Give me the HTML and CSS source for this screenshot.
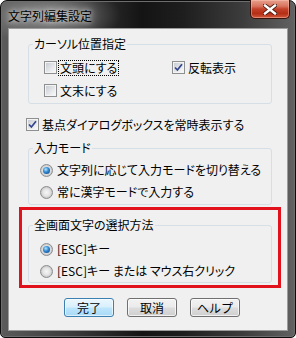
FILE: index.html
```html
<!doctype html>
<html>
  <head>
    <meta charset="UTF-8" />
    <link rel="stylesheet" href="styles.css">
  </head>
  <body>
    <div class="window">
      <div class="titlebar">
        <span class="title">文字列編集設定</span>
        <span class="close">
          <svg width="14" height="11" viewBox="0 0 14 11">
            <path d="M2 1.5 L12 9.5 M12 1.5 L2 9.5" stroke="#4a1a10" stroke-width="4.2" stroke-linecap="square" />
            <path d="M2 1.5 L12 9.5 M12 1.5 L2 9.5" stroke="#ffffff" stroke-width="2.4" stroke-linecap="square" />
          </svg>
        </span>
      </div>
      <div class="client">
        <fieldset class="group">
          <legend>カーソル位置指定</legend>
          <div class="cursor-grid">
            <label class="check">
              <span class="box"></span>
              <span class="text focus">文頭にする</span>
            </label>
            <label class="check">
              <span class="box">
                <svg width="9" height="9" viewBox="0 0 9 9"><path d="M1 4.5 L3.4 7 L8 1.2" fill="none" stroke="#34468c" stroke-width="1.7" /></svg>
              </span>
              <span class="text">反転表示</span>
            </label>
            <label class="check">
              <span class="box"></span>
              <span class="text">文末にする</span>
            </label>
          </div>
        </fieldset>

        <label class="check standalone">
          <span class="box">
            <svg width="9" height="9" viewBox="0 0 9 9"><path d="M1 4.5 L3.4 7 L8 1.2" fill="none" stroke="#34468c" stroke-width="1.7" /></svg>
          </span>
          <span class="text">基点ダイアログボックスを常時表示する</span>
        </label>

        <fieldset class="group group-input">
          <legend>入力モード</legend>
          <div class="radio-list">
            <label class="radio on"><span class="dot"></span><span class="text">文字列に応じて入力モードを切り替える</span></label>
            <label class="radio"><span class="dot"></span><span class="text">常に漢字モードで入力する</span></label>
          </div>
        </fieldset>

        <div class="highlight">
          <fieldset class="group">
            <legend>全画面文字の選択方法</legend>
            <div class="radio-list radio-list-wide">
              <label class="radio on"><span class="dot"></span><span class="text">[ESC]キー</span></label>
              <label class="radio"><span class="dot"></span><span class="text">[ESC]キー または マウス右クリック</span></label>
            </div>
          </fieldset>
        </div>

        <div class="buttons">
          <button class="btn default">完了</button>
          <button class="btn">取消</button>
          <button class="btn">ヘルプ</button>
        </div>
      </div>
    </div>
  </body>
</html>
```

FILE: styles.css
```css
html,
body {
  margin: 0;
  background: #ffffff;
  font-family: "Noto Sans CJK JP", "Liberation Sans", sans-serif;
  font-size: 12px;
  font-feature-settings: "palt";
  color: #000;
}
.window {
  width: 296px;
  height: 338px;
  box-sizing: border-box;
  border: 1px solid #0c0c0c;
  border-radius: 7px 7px 5px 5px;
  box-shadow: inset 0 0 0 1px #6d6d6d;
  background:
    radial-gradient(ellipse 70px 30px at 50px 14px, rgba(190, 190, 190, 0.55), rgba(190, 190, 190, 0) 100%),
    linear-gradient(to right, #5b5b5b 0%, #3a3a3a 25%, #141414 48%, #1e1e1e 62%, #3c3c3c 82%, #626262 100%);
  display: flex;
  flex-direction: column;
  padding: 0 6px 6px 6px;
}
.titlebar {
  height: 27px;
  display: flex;
  justify-content: space-between;
  align-items: flex-start;
}
.title {
  padding: 7px 0 0 1px;
  line-height: 16px;
  font-size: 12px;
  color: #000;
  text-shadow: 0 0 4px #d8d8d8, 0 0 8px #c4c4c4, 0 0 12px #b0b0b0;
}
.close {
  width: 40px;
  height: 19px;
  margin: -1px -1px 0 0;
  box-sizing: border-box;
  border: 1px solid #3a120c;
  border-top: none;
  border-radius: 0 0 5px 5px;
  background: linear-gradient(#e7a18f 0%, #d8735d 35%, #c3412a 50%, #b52e16 75%, #d0583e 100%);
  box-shadow: inset 0 0 0 1px rgba(255, 200, 180, 0.45);
  display: flex;
  align-items: center;
  justify-content: center;
}
.client {
  flex: 1;
  margin: 0 1px 0 1px;
  border: 1px solid #9c9c9c;
  background: #f0f0f0;
  display: flex;
  flex-direction: column;
  align-items: flex-start;
}

fieldset.group {
  margin: 0;
  padding: 0;
  width: 244px;
  box-sizing: border-box;
  border: 1px solid #d5dfe5;
  border-radius: 3px;
  min-width: 0;
}
fieldset.group legend {
  margin-left: 4px;
  padding: 0 1px;
  line-height: 14px;
}
.client > fieldset.group {
  margin-left: 19px;
  margin-top: 8px;
}
.client > fieldset.group-input {
  margin-top: 5px;
}
.cursor-grid {
  display: grid;
  grid-template-columns: 128px auto;
  grid-auto-rows: 23px;
  padding: 5px 0 1px 15px;
}

.check,
.radio {
  display: flex;
  align-items: center;
  height: 23px;
  white-space: nowrap;
}
.check .box {
  width: 13px;
  height: 13px;
  box-sizing: border-box;
  border: 1px solid #8e8f8f;
  background:
    linear-gradient(135deg, #c9cdd3 0%, #e4e6e9 55%, #f8f8f8 100%) content-box,
    #f4f4f4;
  padding: 1px;
  display: flex;
  align-items: center;
  justify-content: center;
  flex: none;
}
.check .box svg {
  display: block;
}
.check .text {
  margin-left: 1px;
  padding: 1px 2px;
  line-height: 14px;
}
.check .focus {
  outline: 1px dotted #000;
  outline-offset: -1px;
}
.standalone {
  margin: 9px 0 0 17px;
}

.radio-list {
  padding: 4px 0 1px 11px;
}
.radio-list-wide {
  padding-top: 6px;
  padding-bottom: 0;
}
.radio {
  height: 22px;
}
.radio .dot {
  width: 13px;
  height: 13px;
  box-sizing: border-box;
  border-radius: 50%;
  border: 1px solid #8a8c8e;
  background: radial-gradient(circle at 50% 50%, #f6f6f6 0%, #e4e4e4 45%, #c9c9c9 70%, #ececec 100%);
  display: flex;
  align-items: center;
  justify-content: center;
  flex: none;
}
.radio.on .dot::after {
  content: "";
  width: 7px;
  height: 7px;
  border-radius: 50%;
  background: radial-gradient(circle at 40% 35%, #b8e6ff 0%, #3a8fd6 40%, #175a9e 75%, #0c3766 100%);
}
.radio .text {
  margin-left: 4px;
  line-height: 14px;
}

.highlight {
  margin: 2px 0 0 10px;
  width: 262px;
  box-sizing: border-box;
  border: 3px solid #e2121c;
  padding: 8px 6px 2px 6px;
}

.buttons {
  display: flex;
  gap: 13px;
  margin: 10px 0 0 55px;
}
.btn {
  width: 50px;
  height: 19px;
  padding: 0;
  font-family: inherit;
  font-size: 12px;
  line-height: 15px;
  color: #000;
  border: 1px solid #707070;
  border-radius: 3px;
  background: linear-gradient(#f2f2f2 0%, #ebebeb 48%, #dddddd 52%, #cfcfcf 100%);
  box-shadow: inset 0 0 0 1px rgba(255, 255, 255, 0.7);
}
.btn.default {
  border-color: #3c7fb1;
  background: linear-gradient(#eaf6fd 0%, #d9f0fc 48%, #bee6fd 52%, #a7d9f5 100%);
  box-shadow: inset 0 0 0 1px rgba(255, 255, 255, 0.6);
}
```
